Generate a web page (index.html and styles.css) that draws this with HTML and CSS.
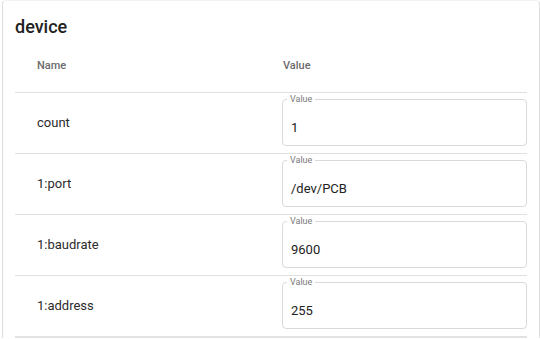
FILE: index.html
```html
<!DOCTYPE html>
<html>
<head>
<meta charset="utf-8">
<link rel="stylesheet" href="styles.css">
</head>
<body>
<div class="card">
  <h2 class="title">device</h2>
  <div class="table">
    <div class="row head">
      <div class="cell name">Name</div>
      <div class="cell value">Value</div>
    </div>
    <div class="row">
      <div class="cell name">count</div>
      <div class="cell value"><div class="field"><span class="label">Value</span><span class="input">1</span></div></div>
    </div>
    <div class="row">
      <div class="cell name">1:port</div>
      <div class="cell value"><div class="field"><span class="label">Value</span><span class="input">/dev/PCB</span></div></div>
    </div>
    <div class="row">
      <div class="cell name">1:baudrate</div>
      <div class="cell value"><div class="field"><span class="label">Value</span><span class="input">9600</span></div></div>
    </div>
    <div class="row last">
      <div class="cell name">1:address</div>
      <div class="cell value"><div class="field"><span class="label">Value</span><span class="input">255</span></div></div>
    </div>
  </div>
</div>
</body>
</html>
```
FILE: styles.css
```css
html, body {
  margin: 0;
  padding: 0;
  background: #fff;
  font-family: Roboto, "Liberation Sans", sans-serif;
  overflow: hidden;
}
.card {
  margin-left: 2px;
  border: 1px solid #dedede;
  border-top-color: #f3f3f3;
  border-bottom: 0;
  border-radius: 4px 4px 0 0;
  padding: 0 12px;
}
.title {
  margin: 14px 0 0;
  font-size: 18px;
  line-height: 24px;
  font-weight: 500;
  color: #222;
}
.row {
  display: grid;
  grid-template-columns: 267px 1fr;
  height: 60px;
  border-bottom: 1px solid #e0e0e0;
}
.row.head {
  height: 53px;
  align-items: center;
}
.row.last {
  border-bottom: 2px solid #e2e2e2;
}
.cell.name {
  padding-left: 22px;
  align-self: center;
  font-size: 13px;
  color: #2b2b2b;
  margin-top: -2px;
}
.head .cell.name, .head .cell.value {
  font-size: 11px;
  font-weight: 500;
  color: #6b6b6b;
  padding-top: 0;
  margin-top: -1px;
}
.head .cell.value {
  padding-left: 1px;
}
.cell.value {
  padding-top: 6px;
}
.field {
  position: relative;
  box-sizing: border-box;
  height: 47px;
  border: 1px solid #dadada;
  border-radius: 4px;
  padding: 10px 8px 0;
  display: flex;
  align-items: center;
}
.label {
  position: absolute;
  top: -6px;
  left: 4px;
  padding: 0 3px;
  background: #fff;
  font-size: 9px;
  line-height: 11px;
  color: #7a7a7a;
}
.input {
  font-size: 13px;
  color: #222;
}
```
